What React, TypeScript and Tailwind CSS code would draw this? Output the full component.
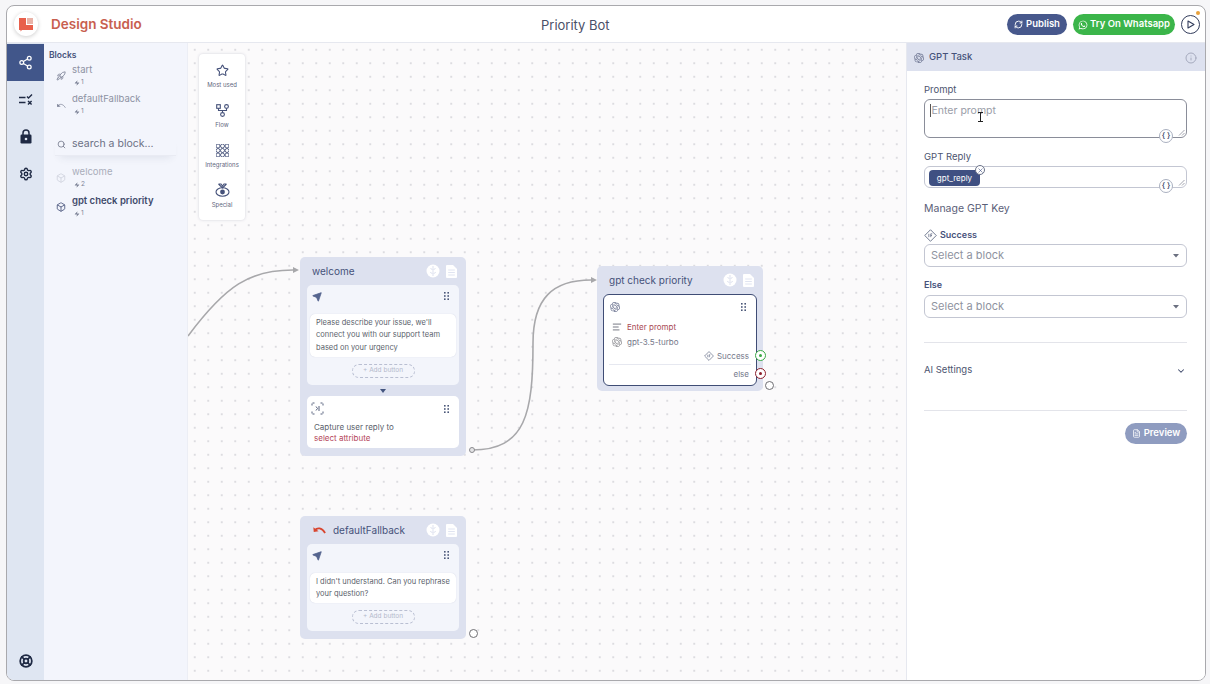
import { useState } from 'react'
import {
  AlignLeft,
  Box,
  ChevronDown,
  FileText,
  Info,
  LifeBuoy,
  RefreshCw,
  Rocket,
  Search,
  Send,
  Settings,
  Share2,
  Star,
  X,
  Zap,
} from 'lucide-react'
import { FaWhatsapp } from 'react-icons/fa'
import { SiOpenai } from 'react-icons/si'

const navy = '#55658f'

const Grip = () => (
  <svg width="5" height="8" viewBox="0 0 5 8" fill="#4a5678">
    <rect x="0" y="0" width="1.6" height="1.6" />
    <rect x="3.4" y="0" width="1.6" height="1.6" />
    <rect x="0" y="3.2" width="1.6" height="1.6" />
    <rect x="3.4" y="3.2" width="1.6" height="1.6" />
    <rect x="0" y="6.4" width="1.6" height="1.6" />
    <rect x="3.4" y="6.4" width="1.6" height="1.6" />
  </svg>
)

const IfIcon = ({ size = 14 }: { size?: number }) => (
  <svg width={size} height={size} viewBox="0 0 14 14" fill="none" stroke="#56607c" strokeWidth="0.9">
    <path d="M7 .8 13.2 7 7 13.2 .8 7Z" strokeLinejoin="round" />
    <path d="M5.2 5.2v3.6M7.3 8.8V5.2h1.6M7.3 7h1.3" strokeWidth="0.8" />
  </svg>
)

const CaptureIcon = () => (
  <svg width="13" height="13" viewBox="0 0 13 13" fill="none" stroke="#56607c" strokeWidth="1">
    <path d="M1 3.5V1h2.5M9.5 1H12v2.5M12 9.5V12H9.5M3.5 12H1V9.5" strokeDasharray="2 1" />
    <path d="M5 4.5 6.5 6.5 5 8.5M8 4v5" />
  </svg>
)

const EqualsCheck = () => (
  <svg width="14" height="12" viewBox="0 0 14 12" fill="none" stroke="#1f2a44" strokeWidth="1.4">
    <path d="M0 3.5h6.5M0 8.5h6.5M8 2.6l1.5 1.5L13 .6M9 7l3.6 3.6M12.6 7 9 10.6" />
  </svg>
)

const LockIcon = () => (
  <svg width="12" height="15" viewBox="0 0 12 15">
    <path d="M3 6V4a3 3 0 0 1 6 0v2" fill="none" stroke="#1f2a44" strokeWidth="1.5" />
    <rect x="0.5" y="5.5" width="11" height="9" rx="1.2" fill="#1f2a44" />
    <circle cx="6" cy="10" r="1.3" fill="#dfe6f2" />
  </svg>
)

const UndoArc = ({ color, width, size }: { color: string; width: number; size: number }) => (
  <svg width={size} height={size * 0.7} viewBox="0 0 16 11" fill="none" stroke={color} strokeWidth={width} strokeLinejoin="round">
    <path d="M3 6C6 2.5 11 2.5 15 9" />
    <path d="M1.5 2.5 2 8 7.5 7Z" fill={color} stroke="none" />
  </svg>
)

const FlowIcon = () => (
  <svg width="13" height="13" viewBox="0 0 13 13" fill="none" stroke="#46527a" strokeWidth="1.1">
    <rect x="0.7" y="0.7" width="3.6" height="3.6" />
    <circle cx="10.5" cy="2.5" r="1.9" />
    <circle cx="6.5" cy="10.5" r="1.9" />
    <path d="M2.5 4.3V6.5h8V4.4M6.5 6.5v2.1" />
  </svg>
)

const GridIcon = () => (
  <svg width="13" height="13" viewBox="0 0 13 13" fill="none" stroke="#46527a" strokeWidth="0.9">
    {[2, 6.5, 11].map((y) => [2, 6.5, 11].map((x) => <circle key={`${x}-${y}`} cx={x} cy={y} r="2" />))}
  </svg>
)

const SpecialIcon = () => (
  <svg width="15" height="14" viewBox="0 0 15 14" fill="none" stroke="#46527a" strokeWidth="1.1">
    <path d="M3.5 1 7.5 5l4-4M3.5 1h2.5l1.5 2 1.5-2h2.5" />
    <ellipse cx="7.5" cy="9" rx="6.5" ry="4.2" />
    <circle cx="7.5" cy="9" r="2.4" fill="#46527a" stroke="none" />
  </svg>
)

const HeadIcon = () => (
  <svg width="14" height="14" viewBox="0 0 14 14">
    <circle cx="7" cy="7" r="6.5" fill="#ffffff" />
    <path d="M7 2v10M4.5 4.5c1 0 1.5.6 1.5 1.5M4.2 8.5c1 0 1.8.4 1.8 1.5M9.5 4.5c-1 0-1.5.6-1.5 1.5M9.8 8.5c-1 0-1.8.4-1.8 1.5" fill="none" stroke="#dde1ef" strokeWidth="1" />
  </svg>
)

const NoteIcon = () => (
  <svg width="11" height="13" viewBox="0 0 11 13">
    <path d="M1 0h6l4 4v8a1 1 0 0 1-1 1H1a1 1 0 0 1-1-1V1a1 1 0 0 1 1-1Z" fill="#ffffff" />
    <path d="M2.2 5h6.6M2.2 7.5h6.6M2.2 10h6.6" stroke="#dde1ef" strokeWidth="0.9" />
  </svg>
)

const ResizeGrip = () => (
  <svg width="7" height="7" viewBox="0 0 7 7" className="absolute bottom-[1px] right-[1px]" stroke="#8a8d99" strokeWidth="0.8">
    <path d="M1 6.5 6.5 1M4 6.5 6.5 4" />
  </svg>
)

const BraceButton = () => (
  <div className="absolute right-[13px] bottom-[-6px] flex h-[14px] w-[14px] items-center justify-center rounded-full border border-[#aab0c0] bg-white text-[7.5px] font-semibold text-[#44506e]">
    {'{ }'}
  </div>
)

const SideItem = ({ icon, name, count, dim, bold }: { icon: React.ReactNode; name: string; count: number; dim?: boolean; bold?: boolean }) => (
  <div className="flex items-center pl-[11px]">
    <div className="flex w-[11px] justify-center">{icon}</div>
    <div className="ml-[6px]">
      <div className={`text-[9.5px] leading-[14px] ${bold ? 'text-[9.2px] font-semibold text-[#3f4a6b]' : dim ? 'text-[#a9adba]' : 'text-[#8d92a3]'}`}>{name}</div>
      <div className="flex h-[12px] items-center gap-[1px] pl-[2px] text-[6.5px] text-[#7d8397]">
        <Zap size={6} fill="#7d8397" strokeWidth={0} />
        {count}
      </div>
    </div>
  </div>
)

const PaletteItem = ({ icon, label }: { icon: React.ReactNode; label: string }) => (
  <div className="flex h-[40px] flex-col items-center">
    <div className="flex h-[20px] items-center">{icon}</div>
    <div className="mt-[1px] text-[6px] leading-[8px] text-[#5f6780]">{label}</div>
  </div>
)

const NodeHeader = ({ title, icon }: { title: string; icon?: React.ReactNode }) => (
  <div className="flex h-[28px] items-center pl-[12px] pr-[9px]">
    {icon}
    <span className="text-[10px] text-[#46527a]">{title}</span>
    <div className="ml-auto flex items-center gap-[6px]">
      <HeadIcon />
      <NoteIcon />
    </div>
  </div>
)

const AddButton = () => (
  <div className="mx-auto flex h-[14px] w-[63px] items-center justify-center rounded-full border border-dashed border-[#b9bfd2] text-[6.5px] text-[#b4b9cb]">
    + Add button
  </div>
)

const MessageCard = ({ text, height }: { text: string[]; height: string }) => (
  <div className="mx-[7px] rounded-[5px] bg-[#f3f5fb] px-[3px] pb-[7px]">
    <div className="flex h-[29px] items-start justify-between pl-[2px] pr-[7px] pt-[7px]">
      <Send size={10} fill={navy} stroke={navy} />
      <Grip />
    </div>
    <div className={`flex flex-col justify-center rounded-[5px] bg-white px-[6px] text-[7.5px] leading-[12.5px] text-[#5b5f6c] shadow-[0_0_1px_#c5cadb] ${height}`}>
      {text.map((t) => (
        <div key={t}>{t}</div>
      ))}
    </div>
    <div className="mt-[7px]">
      <AddButton />
    </div>
  </div>
)

const SelectBox = () => (
  <div className="flex h-[23px] items-center justify-between rounded-[6px] border border-[#c3c6d2] px-[6px] text-[11px] text-[#8f93a0]">
    Select a block
    <svg width="6" height="4" viewBox="0 0 6 4" className="mr-[1px]" fill="#6b7080">
      <path d="M0 0h6L3 3.5Z" />
    </svg>
  </div>
)

export default function App() {
  const [title] = useState('Priority Bot')

  return (
    <div className="h-[684px] w-[1210px] overflow-hidden bg-[#f6f6f8] pl-[6px] pr-[4px] pt-[5px] pb-[3px] font-['Inter','Noto_Sans',sans-serif]">
      <div className="flex h-full flex-col overflow-hidden rounded-[8px] border border-[#a9a9ad] bg-white">
        {/* Top bar */}
        <div className="relative flex h-[37px] shrink-0 items-center border-b border-[#e6e8ef]">
          <div className="flex w-[37px] justify-center">
            <div className="flex h-[24px] w-[24px] items-center justify-center rounded-full bg-white shadow-[0_1px_4px_rgba(0,0,0,0.2)]">
              <svg width="14" height="15" viewBox="0 0 14 15">
                <path d="M0 1h7v7h7v5H3l-1.5 1.5V13H0Z" fill="#e8604c" />
                <rect x="8" y="1" width="6" height="6" fill="#e9b3a8" />
              </svg>
            </div>
          </div>
          <span className="ml-[7px] text-[13.5px] font-semibold text-[#c8604f]">Design Studio</span>
          <span className="absolute left-[534px] top-[10px] text-[13px] leading-[18px] text-[#4a5068]">{title}</span>
          <div className="ml-auto flex items-center pt-[1px]">
            <div className="flex h-[21px] w-[60px] items-center justify-center gap-[3px] rounded-full bg-[#47588c] text-[9.5px] font-semibold text-white">
              <RefreshCw size={9} strokeWidth={2.5} />
              Publish
            </div>
            <div className="ml-[6px] flex h-[21px] w-[102px] items-center justify-center gap-[2px] rounded-full bg-[#3bb54a] text-[9.5px] font-semibold text-white">
              <FaWhatsapp size={10} />
              Try On Whatsapp
            </div>
            <div className="relative ml-[6px] mr-[5px] flex h-[19px] w-[19px] items-center justify-center rounded-full border border-[#333d5c]">
              <svg width="8" height="9" viewBox="0 0 8 9" fill="none" stroke="#333d5c" strokeWidth="1.1">
                <path d="M1 1v7l6-3.5Z" strokeLinejoin="round" />
              </svg>
              <div className="absolute right-[-1px] top-[-5px] h-[4px] w-[4px] rounded-full bg-[#e8a13c]" />
            </div>
          </div>
        </div>

        <div className="flex min-h-0 flex-1">
          {/* Icon rail */}
          <div className="flex w-[37px] shrink-0 flex-col bg-[#dfe6f2] pt-[1px]">
            <div className="flex h-[37px] items-center justify-center bg-[#41568a] text-white">
              <Share2 size={15} />
            </div>
            <div className="flex h-[37px] items-center justify-center">
              <EqualsCheck />
            </div>
            <div className="flex h-[37px] items-center justify-center">
              <LockIcon />
            </div>
            <div className="flex h-[37px] items-center justify-center text-[#1f2a44]">
              <Settings size={14} strokeWidth={2.4} />
            </div>
            <div className="mt-auto mb-[12px] flex justify-center text-[#1f2a44]">
              <LifeBuoy size={14} strokeWidth={3} />
            </div>
          </div>

          {/* Blocks list */}
          <div className="w-[144px] shrink-0 border-r border-[#eceef5] bg-[#f3f5fc] pt-[6px]">
            <div className="pl-[5px] text-[8.5px] font-semibold leading-[12px] text-[#46527a]">Blocks</div>
            <div className="mt-[2px] flex flex-col gap-[3px]">
              <SideItem icon={<Rocket size={10} className="text-[#7d8397]" />} name="start" count={1} />
              <SideItem icon={<UndoArc color="#7d8397" width={1.2} size={10} />} name="defaultFallback" count={1} />
            </div>
            <div className="mx-[11px] mt-[17px] flex h-[21px] items-center gap-[6px] border-b border-[#e9ebf3] pb-[2px] pl-[2px] text-[10.5px] text-[#6b7084] shadow-[0_6px_8px_-5px_rgba(60,70,100,0.12)]">
              <Search size={9} />
              search a block...
            </div>
            <div className="mt-[9px] flex flex-col gap-[3px]">
              <SideItem icon={<Box size={10} className="text-[#cfd3dd]" />} name="welcome" count={2} dim />
              <SideItem icon={<Box size={10} className="text-[#46527a]" />} name="gpt check priority" count={1} bold />
            </div>
          </div>

          {/* Canvas */}
          <div className="relative min-w-0 flex-1 bg-[#fbfafb] bg-[radial-gradient(#dcdce0_0.7px,transparent_0.8px)] bg-[length:13.5px_13.5px]">
            <svg className="absolute inset-0 h-full w-full" fill="none" stroke="#a8a8ab" strokeWidth="1.6">
              <path d="M0 293C38 242 62 227 105 227" />
              <path d="M284 407C338 407 345 370 345 300C345 255 365 237 403 237" />
              <path d="M105 224l6 3-6 3ZM403 234l6 3-6 3Z" fill="#a8a8ab" stroke="none" />
            </svg>

            {/* Palette */}
            <div className="absolute left-[11px] top-[11px] flex h-[166px] w-[46px] flex-col rounded-[4px] bg-white pt-[6px] shadow-[0_0_3px_rgba(60,70,100,0.22)]">
              <PaletteItem icon={<Star size={13} className="text-[#46527a]" />} label="Most used" />
              <PaletteItem icon={<FlowIcon />} label="Flow" />
              <PaletteItem icon={<GridIcon />} label="Integrations" />
              <PaletteItem icon={<SpecialIcon />} label="Special" />
            </div>

            {/* welcome */}
            <div className="absolute left-[112px] top-[214px] h-[199px] w-[166px] rounded-[5px] bg-[#dde1ef]">
              <NodeHeader title="welcome" />
              <MessageCard height="h-[43px]" text={["Please describe your issue, we'll", 'connect you with our support team', 'based on your urgency']} />
              <div className="flex h-[11px] items-center justify-center">
                <svg width="6" height="4" viewBox="0 0 6 4" fill="#44557f">
                  <path d="M0 0h6L3 4Z" />
                </svg>
              </div>
              <div className="mx-[7px] h-[52px] rounded-[5px] bg-white px-[7px] pt-[6px]">
                <div className="ml-[-3px] flex items-center justify-between pr-[3px]">
                  <CaptureIcon />
                  <Grip />
                </div>
                <div className="mt-[7px] text-[8px] leading-[11px] text-[#5b5f6c]">Capture user reply to</div>
                <div className="text-[8px] leading-[11px] text-[#b5465a]">select attribute</div>
              </div>
            </div>
            <div className="absolute left-[281px] top-[404px] h-[6px] w-[6px] rounded-full border border-[#8a8a8e] bg-[#e4e4e6]" />

            {/* gpt check priority */}
            <div className="absolute left-[409px] top-[223px] h-[125px] w-[166px] rounded-[5px] bg-[#dde1ef]">
              <NodeHeader title="gpt check priority" />
              <div className="mx-[6px] h-[92px] rounded-[6px] border-[1.5px] border-[#3f4d75] bg-white">
                <div className="flex h-[24px] items-center justify-between pl-[6px] pr-[10px]">
                  <SiOpenai size={10} className="text-[#6b7390]" />
                  <Grip />
                </div>
                <div className="flex h-[15px] items-center gap-[5px] pl-[8px] text-[8px] text-[#a94a55]">
                  <AlignLeft size={10} className="text-[#5b5f6c]" />
                  Enter prompt
                </div>
                <div className="flex h-[15px] items-center gap-[5px] pl-[8px] text-[8px] text-[#74788a]">
                  <SiOpenai size={10} className="text-[#8d8d92]" />
                  gpt-3.5-turbo
                </div>
                <div className="flex h-[14px] items-center justify-end gap-[3px] pr-[7px] text-[8px] text-[#74788a]">
                  <IfIcon size={10} />
                  Success
                </div>
                <div className="mx-[5px] mt-[1px] border-t border-[#e6e8f0]" />
                <div className="flex h-[17px] items-center justify-end pr-[7px] text-[8px] text-[#74788a]">else</div>
              </div>
            </div>
            <div className="absolute left-[567px] top-[307px] flex h-[11px] w-[11px] items-center justify-center rounded-full border-[1.5px] border-[#3aa845] bg-white">
              <div className="h-[3px] w-[3px] rounded-full bg-[#3aa845]" />
            </div>
            <div className="absolute left-[567px] top-[325px] flex h-[11px] w-[11px] items-center justify-center rounded-full border-[1.5px] border-[#8e1f2c] bg-white">
              <div className="h-[3px] w-[3px] rounded-full bg-[#8e1f2c]" />
            </div>
            <div className="absolute left-[577px] top-[338px] h-[9px] w-[9px] rounded-full border border-[#6f6f73] bg-white" />

            {/* defaultFallback */}
            <div className="absolute left-[112px] top-[473px] h-[123px] w-[166px] rounded-[5px] bg-[#dde1ef]">
              <NodeHeader title="defaultFallback" icon={<span className="mr-[7px] flex"><UndoArc color="#d8452f" width={2} size={14} /></span>} />
              <MessageCard height="h-[30px]" text={["I didn't understand. Can you rephrase", 'your question?']} />
            </div>
            <div className="absolute left-[281px] top-[586px] h-[9px] w-[9px] rounded-full border border-[#6f6f73] bg-white" />
          </div>

          {/* Right panel */}
          <div className="w-[299px] shrink-0 border-l border-[#e6e8ef] bg-white">
            <div className="flex h-[28px] items-center gap-[5px] bg-[#dde1ef] pl-[7px] pr-[8px] pt-[1px] text-[9.5px] font-medium text-[#46527a]">
              <SiOpenai size={10} className="text-[#6b7390]" />
              GPT Task
              <Info size={12} className="ml-auto text-[#a5aabd]" />
            </div>
            <div className="pl-[17px] pr-[18px]">
              <div className="mt-[12px] text-[9.5px] leading-[14px] text-[#4d5570]">Prompt</div>
              <div className="relative mt-[2px] h-[39px] rounded-[6px] border border-[#8a8d99] px-[5px] pt-[4px]">
                <div className="flex h-[13px] items-center text-[10.5px] text-[#9a9da8]">
                  <span className="mr-[0.5px] h-[13px] w-px bg-[#555]" />
                  Enter prompt
                </div>
                <BraceButton />
                <ResizeGrip />
                {/* mouse pointer caught in the shot */}
                <svg width="5" height="10" viewBox="0 0 5 10" className="absolute left-[53px] top-[12px]" fill="none" stroke="#222" strokeWidth="1">
                  <path d="M0 .5h5M2.5.5v9M0 9.5h5" />
                </svg>
              </div>
              <div className="mt-[12px] text-[9.5px] leading-[14px] text-[#4d5570]">GPT Reply</div>
              <div className="relative mt-[2px] h-[22px] rounded-[6px] border border-[#c3c6d2] px-[4px] pt-[3px]">
                <div className="relative flex h-[16px] w-[51px] items-center justify-center rounded-[4px] bg-[#3f5082] text-[8px] text-white">
                  gpt_reply
                  <div className="absolute right-[-5px] top-[-5px] flex h-[10px] w-[10px] items-center justify-center rounded-full border border-[#6a7288] bg-white text-[#3f5082]">
                    <X size={7} />
                  </div>
                </div>
                <BraceButton />
                <ResizeGrip />
              </div>
              <div className="mt-[14px] text-[10.5px] leading-[14px] text-[#5a6078]">Manage GPT Key</div>
              <div className="mt-[12px] flex items-center gap-[3px] text-[9px] font-semibold leading-[14px] text-[#46527a]">
                <IfIcon size={13} />
                Success
              </div>
              <div className="mt-[2px]">
                <SelectBox />
              </div>
              <div className="mt-[11px] text-[9px] font-semibold leading-[14px] text-[#46527a]">Else</div>
              <div className="mt-[3px]">
                <SelectBox />
              </div>
              <div className="mt-[24px] border-t border-[#e3e4ea]" />
              <div className="mt-[20px] flex h-[14px] items-center justify-between pr-[1px] text-[9.5px] text-[#4d5570]">
                AI Settings
                <ChevronDown size={10} strokeWidth={2.5} className="mt-[2px] text-[#3f4a6b]" />
              </div>
              <div className="mt-[33px] border-t border-[#e3e4ea]" />
              <div className="mt-[12px] flex justify-end">
                <div className="flex h-[21px] w-[62px] items-center justify-center gap-[3px] rounded-full bg-[#8f9cc0] text-[9.5px] font-semibold text-white">
                  <FileText size={9} />
                  Preview
                </div>
              </div>
            </div>
          </div>
        </div>
      </div>
    </div>
  )
}
